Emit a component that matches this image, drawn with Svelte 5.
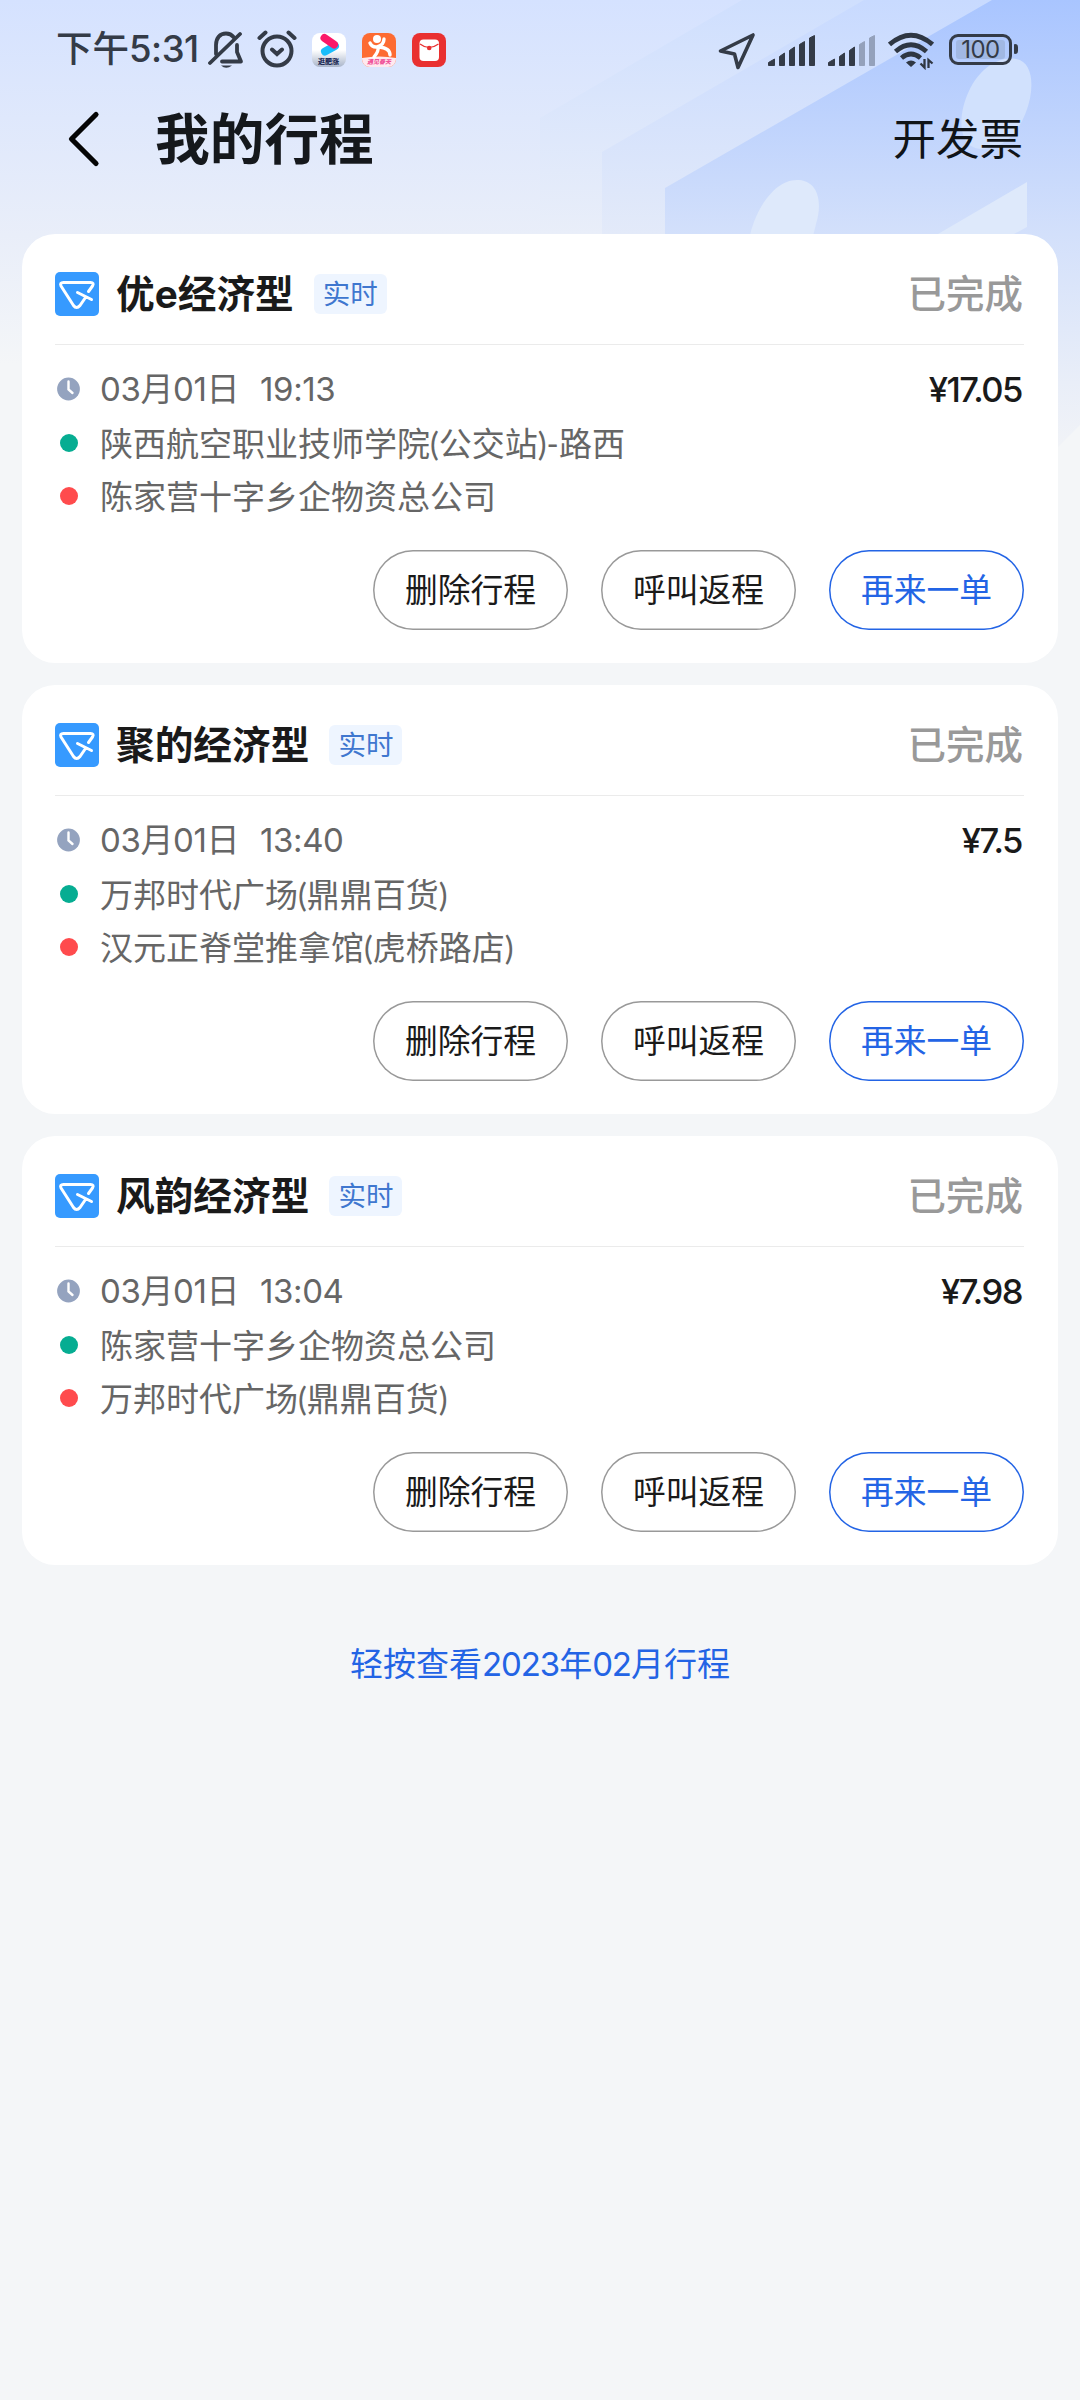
<script>
  const trips = [
    { name: '优e经济型', date: '03月01日', time: '19:13', price: '¥17.05', from: '陕西航空职业技师学院(公交站)-路西', to: '陈家营十字乡企物资总公司' },
    { name: '聚的经济型', date: '03月01日', time: '13:40', price: '¥7.5', from: '万邦时代广场(鼎鼎百货)', to: '汉元正脊堂推拿馆(虎桥路店)' },
    { name: '风韵经济型', date: '03月01日', time: '13:04', price: '¥7.98', from: '陈家营十字乡企物资总公司', to: '万邦时代广场(鼎鼎百货)' }
  ];
</script>

<div class="page">
  <svg class="backdrop" viewBox="0 0 1080 480" width="1080" height="480" aria-hidden="true">
    <defs>
      <linearGradient id="sky" x1="0" y1="0" x2="0" y2="1">
        <stop offset="0" stop-color="#d5e2ff" />
        <stop offset="0.49" stop-color="#e9eef9" />
        <stop offset="0.76" stop-color="#f4f6f8" />
        <stop offset="1" stop-color="#f4f6f8" />
      </linearGradient>
      <linearGradient id="band" gradientUnits="userSpaceOnUse" x1="0" y1="0" x2="0" y2="450">
        <stop offset="0" stop-color="#a9c5ff" />
        <stop offset="0.52" stop-color="#d3e0fb" />
        <stop offset="0.85" stop-color="#e9eef8" />
        <stop offset="1" stop-color="#f1f3f7" />
      </linearGradient>
      <linearGradient id="mid" gradientUnits="userSpaceOnUse" x1="0" y1="0" x2="0" y2="234">
        <stop offset="0" stop-color="#c8daff" />
        <stop offset="1" stop-color="#e3eaf9" />
      </linearGradient>
      <linearGradient id="far" gradientUnits="userSpaceOnUse" x1="0" y1="0" x2="0" y2="234">
        <stop offset="0" stop-color="#cfdffe" />
        <stop offset="1" stop-color="#e9eef9" />
      </linearGradient>
    </defs>
    <rect width="1080" height="480" fill="url(#sky)" />
    <path d="M540 118 742 0H1080V240H540Z" fill="url(#far)" />
    <path d="M602 152 864 0H1080V240H602Z" fill="url(#mid)" />
    <path d="M665 188 992 0H1080V425L1058 447H665Z" fill="url(#band)" />
    <path d="M1016 59C1035 62 1034 92 1026 112C1018 134 1002 149 981 149C958 148 957 116 969 91C979 70 997 56 1016 59Z" fill="#d1e1fd" />
    <path d="M799 180C820 182 822 205 816 224L812 240H749C754 212 774 178 799 180Z" fill="#dee9fb" />
    <path d="M938 234 1027 182V227L1014 234Z" fill="#dee9fb" />
  </svg>

  <header class="status">
    <span class="clock">下午<span class="num">5:31</span></span>
    <svg class="bell" width="36" height="40" viewBox="0 0 36 40" fill="none" stroke="#343b47" stroke-width="3.8" stroke-linecap="round">
      <path d="M8 24V15C8 8 12 3.5 18 3.5C21 3.5 24 5 25.500 7M29 15V22L33 31.500H14" stroke-linejoin="round" />
      <path d="M2 33 32 4" />
      <path d="M13 35.500H24Q18 40 13 35.500Z" fill="#343b47" stroke="none" />
    </svg>
    <svg class="alarm" width="40" height="40" viewBox="0 0 40 40" fill="none" stroke="#343b47" stroke-width="4" stroke-linecap="round">
      <circle cx="20" cy="22" r="14.500" />
      <path d="M2.500 9 8.500 3.500M37.500 9 31.500 3.500M15 20.500 20 25 25 20.500" />
    </svg>
    <svg class="app" width="34" height="34" viewBox="0 0 34 34">
      <defs><linearGradient id="silver" x1="0" y1="0" x2="0" y2="1"><stop offset=".5" stop-color="#fff" /><stop offset="1" stop-color="#a9b5ca" /></linearGradient></defs>
      <rect width="34" height="34" rx="8" fill="url(#silver)" />
      <path d="M13 18.500 23 13" stroke="#19bdfb" stroke-width="8" stroke-linecap="round" />
      <path d="M12.500 5 22 11.500" stroke="#fb1868" stroke-width="8" stroke-linecap="round" />
      <text class="tiny navy" x="6" y="31">逛肥涨</text>
    </svg>
    <svg class="app" width="34" height="34" viewBox="0 0 34 34">
      <defs><clipPath id="tile"><rect width="34" height="34" rx="8" /></clipPath></defs>
      <g clip-path="url(#tile)">
        <rect width="34" height="34" fill="#fd6b32" />
        <path d="M0 25Q17 22 34 25V34H0Z" fill="#ffe9ef" />
      </g>
      <circle cx="15" cy="6" r="4" fill="#fff" />
      <path d="M8 10Q10 14.500 15 14Q22 12 22 6M17 14Q28 15 28 22M16 14Q17 18 12 24" fill="none" stroke="#fff" stroke-width="3.400" stroke-linecap="round" />
      <text class="tiny pink" x="5" y="31">遇见春天</text>
    </svg>
    <svg class="app" width="34" height="34" viewBox="0 0 34 34">
      <rect width="34" height="34" rx="8" fill="#e93030" />
      <rect x="7.500" y="6.500" width="19.500" height="21.500" rx="4" fill="#fff" />
      <path d="M8 11Q17 18 26.500 11" fill="none" stroke="#e93030" stroke-width="1.200" />
      <circle cx="17.200" cy="15" r="2.300" fill="#e93030" />
    </svg>

    <svg class="locate" width="38" height="38" viewBox="0 0 38 38"><path d="M2.500 19 35 3 20 35.500 16.500 22Z" fill="none" stroke="#343b47" stroke-width="3.600" stroke-linejoin="round" /></svg>
    <svg class="bars" width="48" height="32" viewBox="0 0 48 32" fill="#343b47" stroke="#343b47" stroke-linejoin="round">
      <path d="M.5 27.500 6.500 24V30.500H.5ZM11.500 21.500 16.500 18V30.500H11.500ZM21.500 15.500 26.500 12V30.500H21.500ZM31.500 9.500 36.500 6.500V30.500H31.500ZM41.500 3 46.500 .5V30.500H41.500Z" />
    </svg>
    <svg class="bars" width="48" height="32" viewBox="0 0 48 32" fill="#343b47" stroke="#343b47" stroke-linejoin="round">
      <path d="M.5 27.500 6.500 24V30.500H.5ZM11.500 21.500 16.500 18V30.500H11.500ZM21.500 15.500 26.500 12V30.500H21.500Z" />
      <path d="M31.500 9.500 36.500 6.500V30.500H31.500ZM41.500 3 46.500 .5V30.500H41.500Z" fill="#94a1bb" stroke="#94a1bb" />
    </svg>
    <svg class="wifi" width="46" height="38" viewBox="0 0 46 38" fill="none" stroke="#2f3743" stroke-width="4.800">
      <path d="M1.500 12.500Q23-6 44.500 12.500M7.500 19.500Q23 6 38.500 19.500M13.500 26Q23 18 32.500 26" />
      <path d="M18 30.500Q23 26.500 28 30.500L23 35Z" fill="#2f3743" stroke="none" />
      <path d="M36.500 27V35.500L32.500 31.500M40.500 36V28L44.500 31.500" stroke-width="2.300" />
    </svg>
    <span class="battery"><span class="level">100</span></span>
    <span class="cap"></span>
  </header>

  <nav class="top">
    <svg width="34" height="58" viewBox="0 0 34 58"><path d="M30 4.500 5.500 29 30 53.500" fill="none" stroke="#050505" stroke-width="5.200" stroke-linecap="round" stroke-linejoin="round" /></svg>
    <h1>我的行程</h1>
    <span class="invoice">开发票</span>
  </nav>

  <main>
    {#each trips as trip}
      <section class="card">
        <div class="head">
          <svg class="logo" width="44" height="44" viewBox="0 0 44 44">
            <rect width="44" height="44" rx="5" fill="#369aff" />
            <path d="M33.500 19.500 37.500 14Q39.500 10.500 35.500 10.500H8.500Q4.500 10.500 6 14L18.500 33.500Q21.500 37.500 25 33.500L30.500 25.500M22.500 20.500 36.500 27.500" fill="none" stroke="#fff" stroke-width="3" stroke-linecap="round" stroke-linejoin="round" />
          </svg>
          <h2>{trip.name}</h2>
          <span class="tag">实时</span>
          <span class="state">已完成</span>
        </div>
        <div class="row">
          <svg class="mark" width="28" height="24" viewBox="0 0 28 24"><circle cx="13.500" cy="12" r="11.400" fill="#94a3bf" /><path d="M13.500 4.500V12.500L17.500 16" fill="none" stroke="#fff" stroke-width="2.400" stroke-linecap="round" /></svg>
          <span class="when">{trip.date}</span><span class="when hour">{trip.time}</span>
          <span class="price">{trip.price}</span>
        </div>
        <div class="row"><i class="dot green"></i><span class="place">{trip.from}</span></div>
        <div class="row"><i class="dot red"></i><span class="place">{trip.to}</span></div>
        <div class="actions">
          <button>删除行程</button>
          <button>呼叫返程</button>
          <button class="primary">再来一单</button>
        </div>
      </section>
    {/each}
  </main>

  <a class="more" href="#more">轻按查看<span class="num">2023</span>年<span class="num">02</span>月行程</a>
</div>

<style>
  :global(body) { margin: 0; background: #f4f6f8; }
  .page {
    position: relative;
    width: 1080px;
    height: 2400px;
    overflow: hidden;
    background: #f4f6f8;
    font-family: Inter, "Noto Sans CJK SC", sans-serif;
    color: #1a1a1a;
    display: flex;
    flex-direction: column;
  }
  .backdrop { position: absolute; top: 0; left: 0; }
  .status, .top, main, .more { position: relative; }
  .status {
    box-sizing: border-box;
    height: 98px;
    padding: 0 62px 0 56px;
    display: flex;
    align-items: center;
    color: #343b47;
  }
  .clock { font-size: 36.500px; font-weight: 500; width: 152px; white-space: nowrap; line-height: 50px; }
  .clock .num { letter-spacing: -0.500px; }
  .bell { margin-top: 2px; }
  .alarm { margin-left: 13px; }
  .app { margin-left: 16px; margin-top: 2px; }
  .alarm + .app { margin-left: 15px; }
  .tiny { font-size: 7px; font-weight: 900; }
  .navy { fill: #1e2c57; }
  .pink { font-size: 6px; fill: #f0559b; font-style: italic; }
  .locate { margin-left: auto; margin-top: 4px; }
  .bars { margin-left: 12px; margin-top: 3px; }
  .wifi { margin-left: 12px; margin-top: 4px; }
  .battery {
    box-sizing: border-box;
    width: 63px;
    height: 31px;
    margin-left: 15px;
    padding: 3px 4px;
    border: 3px solid #343b47;
    border-radius: 9px;
    display: flex;
  }
  .level {
    flex: 1;
    border-radius: 3px;
    background: #a1b8e3;
    font-size: 24px;
    line-height: 20px;
    text-align: center;
    letter-spacing: -0.500px;
  }
  .cap { width: 4px; height: 10px; margin-left: 2px; border-radius: 1px 3px 3px 1px; background: #343b47; }
  .top {
    box-sizing: border-box;
    height: 136px;
    padding: 0 57px 54px 66px;
    display: flex;
    align-items: center;
  }
  h1 { margin: 0 0 0 55px; font-size: 54.700px; font-weight: 700; line-height: 80px; color: #15181c; }
  .invoice { margin-left: auto; font-size: 43.500px; line-height: 60px; color: #101418; }
  main { padding: 0 22px; display: flex; flex-direction: column; gap: 22px; }
  .card {
    box-sizing: border-box;
    height: 429px;
    padding: 0 34px 0 33px;
    border-radius: 33px;
    background: #fff;
  }
  .head {
    box-sizing: border-box;
    height: 111px;
    padding-top: 9px;
    border-bottom: 1px solid #ebebeb;
    display: flex;
    align-items: center;
  }
  h2 { margin: 0 0 0 17px; font-size: 38.700px; font-weight: 700; line-height: 54px; }
  .tag {
    margin-left: 20px;
    width: 73px;
    height: 40px;
    border-radius: 6px;
    background: #eef5ff;
    color: #3f77cf;
    font-size: 27.500px;
    line-height: 40px;
    text-align: center;
  }
  .state { margin-left: auto; font-size: 38.500px; line-height: 54px; font-weight: 500; color: #999; margin-right: 1px; }
  .row { height: 53px; display: flex; align-items: center; font-size: 33px; line-height: 48px; color: #666; white-space: nowrap; }
  .head + .row { padding-top: 17px; height: 54px; }
  .mark { margin-right: 17px; }
  .when { letter-spacing: -0.400px; }
  .hour { margin-left: 21px; }
  .place { font-family: Lato, "Noto Sans CJK SC", sans-serif; }
  .price { margin-left: auto; margin-right: 2px; font-weight: 500; font-size: 34.600px; letter-spacing: -1.500px; color: #1a1a1a; }
  .dot { width: 18px; height: 18px; margin: 0 22px 0 5px; border-radius: 50%; }
  .green { background: #06ad92; }
  .red { background: #ff4b4d; }
  .actions { margin-top: 28px; display: flex; justify-content: flex-end; gap: 33px; }
  button {
    box-sizing: border-box;
    width: 195px;
    height: 80px;
    padding: 0;
    border: 0;
    box-shadow: inset 0 0 0 1.500px #999;
    border-radius: 40px;
    background: none;
    font: inherit;
    font-size: 32.800px;
    line-height: 78px;
    color: #1a1a1a;
  }
  .primary { box-shadow: inset 0 0 0 1.500px #2364e5; color: #2364e5; }
  .more { margin: 75px auto 0; font-size: 33px; line-height: 48px; color: #2364e5; text-decoration: none; }
  .more .num { letter-spacing: -1.100px; }
</style>
